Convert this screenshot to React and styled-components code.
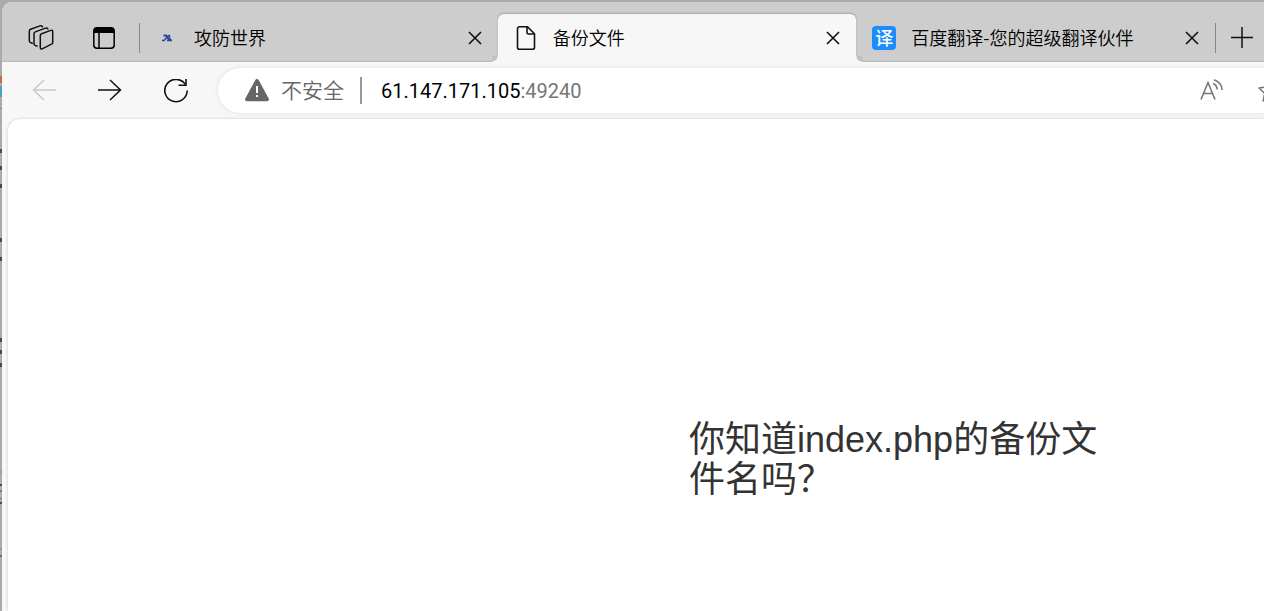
import React, { useState } from 'react';
import styled, { createGlobalStyle } from 'styled-components';

const tabs = [
	{ id: 'adworld', title: '攻防世界', icon: 'xl' },
	{ id: 'backup', title: '备份文件', icon: 'file' },
	{ id: 'fanyi', title: '百度翻译-您的超级翻译伙伴', icon: 'yi' },
];

// bits of the window behind, [y, height, color]
const behind = [
	[76, 7, '#c4694c'],
	[86, 11, '#4f9fc4'],
	[108, 1, '#8a8a8a'],
	[149, 4, '#4a4a4a'],
	[166, 4, '#4a4a4a'],
	[184, 4, '#4a4a4a'],
	[238, 4, '#4a4a4a'],
	[257, 4, '#4a4a4a'],
	[338, 4, '#4a4a4a'],
	[350, 4, '#4a4a4a'],
	[363, 4, '#4a4a4a'],
	[471, 2, '#999'],
	[484, 2, '#4a4a4a'],
	[490, 2, '#777'],
	[498, 1, '#777'],
	[502, 2, '#4a4a4a'],
	[548, 2, '#b09560'],
	[555, 2, '#7d6a58'],
];

const CloseIcon = () => (
	<svg width='14' height='14' viewBox='0 0 14 14' fill='none' stroke='#111' strokeWidth='1.6'>
		<path d='M1 1l12 12M13 1L1 13' />
	</svg>
);

const WorkspacesIcon = () => (
	<svg
		width='26'
		height='26'
		viewBox='0 0 26 26'
		fill='none'
		stroke='#111'
		strokeWidth='1.5'
		strokeLinecap='round'
		strokeLinejoin='round'
	>
		<path d='M13.6 8.7l9.2-3.3c1-.4 1.9.2 1.9 1.2v10.8c0 .8-.4 1.4-1.2 1.8l-9.3 4.6c-1 .5-1.9 0-1.9-1.1V10.5c0-.9.4-1.5 1.3-1.8z' />
		<path d='M9 21l-1.7-.5C6.5 20.2 6 19.6 6 18.7V8.8c0-.9.4-1.5 1.3-1.9l10.2-3.8c1-.4 1.9 0 2.4.9' />
		<path d='M4.2 18.2l-1.6-.6c-.8-.3-1.3-.9-1.3-1.8V6.1c0-.9.4-1.5 1.3-1.9L12 .9c1-.3 1.9 0 2.5.8' />
	</svg>
);

const VerticalTabsIcon = () => (
	<svg width='22' height='22' viewBox='0 0 22 22' fill='none' stroke='#000' strokeWidth='1.5'>
		<rect x='.8' y='.8' width='20.4' height='20.4' rx='3.2' />
		<path d='M1 6V4a3 3 0 0 1 3-3h14a3 3 0 0 1 3 3v2z' fill='#000' stroke='none' />
		<path d='M6 5v16' />
	</svg>
);

const XlIcon = () => (
	<svg width='24' height='24' viewBox='0 0 24 24' fill='none' stroke='#2a4597'>
		<path d='M8.5 9.5h2.5l3.5 5' strokeWidth='2' />
		<path d='M14 9l-5 5.5H7' strokeWidth='1.5' />
		<path d='M14.5 9v3.5l2 2' strokeWidth='1.5' />
		<path d='M12 14.5h5' strokeWidth='1.5' />
	</svg>
);

const FileIcon = () => (
	<svg
		width='24'
		height='24'
		viewBox='0 0 24 24'
		fill='none'
		stroke='#111'
		strokeWidth='1.6'
		strokeLinejoin='round'
	>
		<path d='M5.5.8h8l7 7v13.4a2 2 0 0 1-2 2h-13a2 2 0 0 1-2-2V2.8a2 2 0 0 1 2-2z' />
		<path d='M13 1v5.5a1.5 1.5 0 0 0 1.5 1.5h6' />
	</svg>
);

const BackIcon = () => (
	<svg width='24' height='24' viewBox='0 0 24 24' fill='none' stroke='currentColor' strokeWidth='1.5'>
		<path d='M24 11H1M12 1L1.5 11 12 21' />
	</svg>
);

const ForwardIcon = () => (
	<svg width='24' height='24' viewBox='0 0 24 24' fill='none' stroke='currentColor' strokeWidth='1.5'>
		<path d='M0 11h23M12 1l10.5 10L12 21' />
	</svg>
);

const RefreshIcon = () => (
	<svg width='24' height='24' viewBox='0 0 24 24' fill='none' stroke='currentColor' strokeWidth='1.6'>
		<path d='M23.2 11.5A11.2 11.2 0 1 1 21.5 5.6' />
		<path d='M22 0v6.2h-7.5' />
	</svg>
);

const WarningIcon = () => (
	<svg width='24' height='24' viewBox='0 0 24 24'>
		<path
			d='M10.2 1.2a2 2 0 0 1 3.6 0l9.9 18.3a1.8 1.8 0 0 1-1.6 2.7H1.9a1.8 1.8 0 0 1-1.6-2.7z'
			fill='#666'
		/>
		<path d='M12 7v7M12 16v2' stroke='#fff' strokeWidth='2' />
	</svg>
);

const ReadAloudIcon = () => (
	<svg width='24' height='24' viewBox='0 0 24 24' fill='none' stroke='#767676' strokeWidth='1.6'>
		<path d='M1 20.5L8 3.500l7 17M3.500 14.500h9' />
		<path d='M13 4.500c2.500 1 4 3.300 4.200 6' />
		<path d='M14 .8c4.500 1.500 7.700 5 8.200 10.200' />
	</svg>
);

const StarIcon = () => (
	<svg
		width='24'
		height='24'
		viewBox='0 0 24 24'
		fill='none'
		stroke='#767676'
		strokeWidth='1.5'
		strokeLinejoin='round'
	>
		<path d='M12 1l3.3 7 7.7 1-5.6 5.3L18.8 22 12 18.3 5.2 22l1.4-7.7L1 9l7.7-1z' />
	</svg>
);

const Favicon = ({ icon }) => {
	if (icon === 'xl') return <XlIcon />;
	if (icon === 'file') return <FileIcon />;
	return <YiBadge>译</YiBadge>;
};

const App = () => {
	const [current, setCurrent] = useState('backup');

	return (
		<>
			<GlobalStyle />
			<Desktop>
				<Behind width='2' height='611' aria-hidden='true'>
					{behind.map(([y, height, color]) => (
						<rect key={y} y={y} width='2' height={height} fill={color} />
					))}
				</Behind>
				<BrowserWindow>
					<TabStrip>
						<StripActions>
							<IconButton aria-label='工作区'>
								<WorkspacesIcon />
							</IconButton>
							<IconButton aria-label='标签页'>
								<VerticalTabsIcon />
							</IconButton>
						</StripActions>
						<TabList>
							{tabs.map(tab => (
								<Tab key={tab.id} $active={tab.id === current}>
									<TabButton onClick={() => setCurrent(tab.id)}>
										<Favicon icon={tab.icon} />
										<TabTitle>{tab.title}</TabTitle>
									</TabButton>
									<CloseButton aria-label='关闭'>
										<CloseIcon />
									</CloseButton>
								</Tab>
							))}
						</TabList>
						<NewTab aria-label='新建'>
							<svg width='22' height='22' viewBox='0 0 22 22' stroke='#111' strokeWidth='1.5'>
								<path d='M11 0v21M0 10.5h22' />
							</svg>
						</NewTab>
					</TabStrip>
					<Toolbar>
						<NavButtons>
							<IconButton aria-label='后退' disabled>
								<BackIcon />
							</IconButton>
							<IconButton aria-label='前进'>
								<ForwardIcon />
							</IconButton>
							<IconButton aria-label='刷新'>
								<RefreshIcon />
							</IconButton>
						</NavButtons>
						<AddressBar>
							<Security>
								<WarningIcon />
								<span>不安全</span>
							</Security>
							<Address role='textbox' aria-label='地址' tabIndex={0}>
								61.147.171.105<Port>:49240</Port>
							</Address>
							<IconButton aria-label='朗读'>
								<ReadAloudIcon />
							</IconButton>
							<IconButton aria-label='收藏'>
								<StarIcon />
							</IconButton>
						</AddressBar>
					</Toolbar>
					<Page>
						<Question>你知道index.php的备份文件名吗？</Question>
					</Page>
				</BrowserWindow>
			</Desktop>
		</>
	);
};

export default App;

const GlobalStyle = createGlobalStyle`
	* {
		box-sizing: border-box;
	}
	body {
		margin: 0;
		font-family: 'Noto Sans CJK SC', sans-serif;
	}
	button {
		font: inherit;
		color: inherit;
		background: none;
		border: 0;
		padding: 0;
	}
	svg {
		display: block;
		flex-shrink: 0;
	}
`;

const Desktop = styled.div`
	position: relative;
	min-height: 100vh;
	display: flex;
	padding: 2px 0 0 2px;
	background: #ababab;
	overflow: hidden;
`;

const Behind = styled.svg`
	position: absolute;
	left: 0;
	top: 0;
`;

const BrowserWindow = styled.div`
	flex: 1;
	min-width: 0;
	display: flex;
	flex-direction: column;
	background: #f7f7f7;
	border-top-left-radius: 10px;
	overflow: hidden;
`;

const TabStrip = styled.div`
	display: flex;
	height: 60px;
	padding-top: 12px;
	background: #cdcdcd;
	box-shadow: inset 0 -2px 1px -1px #b8b8b8;
`;

const StripActions = styled.div`
	display: flex;
	align-items: center;
	gap: 39px;
	width: 137px;
	padding-left: 26px;
`;

const IconButton = styled.button`
	display: flex;
	align-items: center;
	justify-content: center;
	color: #111;

	&:disabled {
		color: #c8c8c8;
	}
`;

const TabList = styled.div`
	flex: 1;
	min-width: 0;
	display: flex;
	align-items: stretch;
	padding-right: 1px;
	background:
		linear-gradient(#888, #888) left 9px / 1px 30px no-repeat,
		linear-gradient(#888, #888) right 9px / 1px 30px no-repeat;
`;

const Tab = styled.div`
	position: relative;
	flex: 1 1 0;
	min-width: 0;
	display: flex;
	align-items: center;
	padding: 0 16px;
	border-radius: 6px 6px 0 0;
	background: ${props => (props.$active ? '#f7f7f7' : 'transparent')};
	box-shadow: ${props => (props.$active ? '0 -1px 2px rgba(0, 0, 0, 0.2)' : 'none')};

	/* curved feet of the open tab */
	&::before,
	&::after {
		content: '';
		display: ${props => (props.$active ? 'block' : 'none')};
		position: absolute;
		bottom: 0;
		width: 6px;
		height: 6px;
	}
	&::before {
		right: 100%;
		background: radial-gradient(circle at 0 0, #c0c0c0 5px, #f7f7f7 6px);
	}
	&::after {
		left: 100%;
		background: radial-gradient(circle at 100% 0, #c0c0c0 5px, #f7f7f7 6px);
	}
`;

const TabButton = styled.button`
	flex: 1;
	min-width: 0;
	display: flex;
	align-items: center;
	gap: 15px;
	text-align: left;
`;

const TabTitle = styled.span`
	padding-bottom: 2px;
	font-size: 18px;
	line-height: 24px;
	font-weight: 350;
	color: #000;
	white-space: nowrap;
	overflow: hidden;
	text-overflow: ellipsis;
`;

const YiBadge = styled.span`
	width: 24px;
	height: 24px;
	border-radius: 4px;
	background: #1a8cfc;
	color: #fff;
	font-size: 18px;
	line-height: 23px;
	font-weight: 500;
	text-align: center;
`;

const CloseButton = styled.button`
	padding: 4px 0;
`;

const NewTab = styled.button`
	display: flex;
	align-items: center;
	justify-content: center;
	width: 48px;
	padding-left: 4px;
`;

const Toolbar = styled.div`
	display: flex;
	padding: 6px 0;
`;

const NavButtons = styled.div`
	display: flex;
	align-items: center;
	gap: 42px;
	width: 216px;
	padding-left: 30px;
`;

/* runs on past the right edge of the window */
const AddressBar = styled.div`
	flex: 1;
	min-width: 0;
	display: flex;
	align-items: center;
	gap: 34px;
	height: 45px;
	margin-right: -60px;
	padding: 0 42px 0 27px;
	border-radius: 23px;
	background: #fff;
	box-shadow: 0 0 5px rgba(0, 0, 0, 0.1);
`;

const Security = styled.button`
	display: flex;
	align-items: center;
	gap: 12px;
	padding-right: 16px;
	margin-right: -15px;
	border-right: 2px solid #999;
	font-size: 21px;
	line-height: 24px;
	font-weight: 350;
	color: #666;
	white-space: nowrap;

	span {
		padding-bottom: 3px;
	}
`;

const Address = styled.div`
	flex: 1;
	font-family: Roboto, sans-serif;
	font-size: 20px;
	line-height: 24px;
	color: #000;
	white-space: nowrap;
	cursor: text;
`;

const Port = styled.span`
	color: #767676;
`;

const Page = styled.main`
	flex: 1;
	display: flex;
	justify-content: flex-end;
	align-items: flex-start;
	margin-left: 6px;
	padding: 301px 155px 40px 24px;
	border-top-left-radius: 12px;
	background: #fff;
	box-shadow: 0 0 3px rgba(0, 0, 0, 0.2);
`;

const Question = styled.h1`
	width: 420px;
	margin: 0;
	font-family: 'Liberation Sans', 'Noto Sans CJK SC', sans-serif;
	font-size: 36px;
	line-height: 40px;
	font-weight: 400;
	color: #333;
`;
